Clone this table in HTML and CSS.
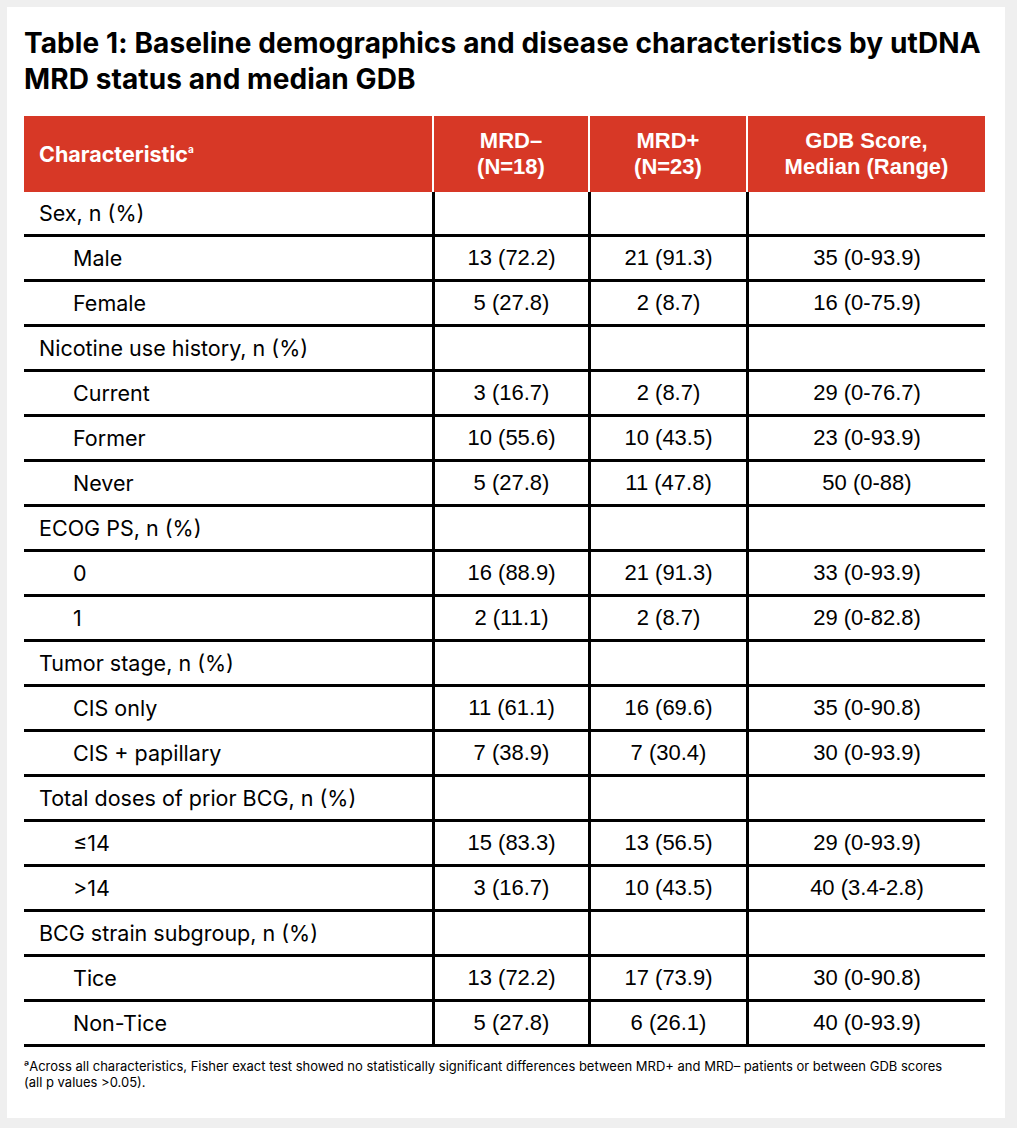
FILE: index.html
```html
<!DOCTYPE html>
<html lang="en">
<head>
<meta charset="utf-8">
<title>Table 1</title>
<link rel="stylesheet" href="styles.css">
</head>
<body>
<div class="card">
  <h1 class="title">Table 1: Baseline demographics and disease characteristics by utDNA MRD status and median GDB</h1>
  <table class="data">
    <colgroup>
      <col class="c1"><col class="c2"><col class="c3"><col class="c4">
    </colgroup>
    <thead>
      <tr>
        <th class="lab">Characteristic<sup>a</sup></th>
        <th>MRD–<br>(N=18)</th>
        <th>MRD+<br>(N=23)</th>
        <th>GDB Score,<br>Median (Range)</th>
      </tr>
    </thead>
    <tbody>
      <tr class="cat"><td>Sex, n (%)</td><td></td><td></td><td></td></tr>
      <tr><td>Male</td><td>13 (72.2)</td><td>21 (91.3)</td><td>35 (0-93.9)</td></tr>
      <tr><td>Female</td><td>5 (27.8)</td><td>2 (8.7)</td><td>16 (0-75.9)</td></tr>
      <tr class="cat"><td>Nicotine use history, n (%)</td><td></td><td></td><td></td></tr>
      <tr><td>Current</td><td>3 (16.7)</td><td>2 (8.7)</td><td>29 (0-76.7)</td></tr>
      <tr><td>Former</td><td>10 (55.6)</td><td>10 (43.5)</td><td>23 (0-93.9)</td></tr>
      <tr><td>Never</td><td>5 (27.8)</td><td>11 (47.8)</td><td>50 (0-88)</td></tr>
      <tr class="cat"><td>ECOG PS, n (%)</td><td></td><td></td><td></td></tr>
      <tr><td>0</td><td>16 (88.9)</td><td>21 (91.3)</td><td>33 (0-93.9)</td></tr>
      <tr><td>1</td><td>2 (11.1)</td><td>2 (8.7)</td><td>29 (0-82.8)</td></tr>
      <tr class="cat"><td>Tumor stage, n (%)</td><td></td><td></td><td></td></tr>
      <tr><td>CIS only</td><td>11 (61.1)</td><td>16 (69.6)</td><td>35 (0-90.8)</td></tr>
      <tr><td>CIS + papillary</td><td>7 (38.9)</td><td>7 (30.4)</td><td>30 (0-93.9)</td></tr>
      <tr class="cat"><td>Total doses of prior BCG, n (%)</td><td></td><td></td><td></td></tr>
      <tr><td>≤14</td><td>15 (83.3)</td><td>13 (56.5)</td><td>29 (0-93.9)</td></tr>
      <tr><td>&gt;14</td><td>3 (16.7)</td><td>10 (43.5)</td><td>40 (3.4-2.8)</td></tr>
      <tr class="cat"><td>BCG strain subgroup, n (%)</td><td></td><td></td><td></td></tr>
      <tr><td>Tice</td><td>13 (72.2)</td><td>17 (73.9)</td><td>30 (0-90.8)</td></tr>
      <tr><td>Non-Tice</td><td>5 (27.8)</td><td>6 (26.1)</td><td>40 (0-93.9)</td></tr>
    </tbody>
  </table>
  <p class="note">ᵃAcross all characteristics, Fisher exact test showed no statistically significant differences between MRD+ and MRD– patients or between GDB scores (all p values &gt;0.05).</p>
</div>
</body>
</html>
```
FILE: styles.css
```css
html, body {
  margin: 0;
  padding: 0;
  background: #efefef;
}
.card {
  box-sizing: border-box;
  margin: 7px 12px 0 7px;
  width: 998px;
  height: 1111px;
  background: #fff;
  padding: 18px 19px 0 17px;
}
.title {
  margin: 0 0 19px;
  font-family: Inter, "Liberation Sans", sans-serif;
  font-weight: 700;
  font-size: 28px;
  line-height: 36px;
  color: #000;
  letter-spacing: 0.1px;
}
.data {
  width: 961px;
  border-collapse: separate;
  border-spacing: 0;
  table-layout: fixed;
}
.c1 { width: 408px; }
.c2 { width: 156px; }
.c3 { width: 158px; }
.c4 { width: 239px; }
.data th {
  background: #d73826;
  color: #fff;
  height: 76px;
  padding: 0;
  font-family: "Liberation Sans", Arial, sans-serif;
  font-weight: 700;
  font-size: 22px;
  line-height: 26px;
  text-align: center;
  vertical-align: middle;
}
.data th + th {
  border-left: 2px solid #fff;
}
.data th.lab {
  text-align: left;
  padding-left: 15px;
  font-family: Inter, "Liberation Sans", sans-serif;
  font-size: 21.5px;
}
.data th.lab sup {
  font-size: 10px;
  vertical-align: 9px;
  line-height: 0;
}
.data td {
  height: 42px;
  padding: 0;
  border-bottom: 3px solid #000;
  font-family: "Liberation Sans", Arial, sans-serif;
  font-size: 22px;
  color: #000;
  text-align: center;
  vertical-align: middle;
}
.data td + td {
  border-left: 3px solid #000;
}
.data td:first-child {
  text-align: left;
  padding-left: 49px;
  font-family: Inter, "Liberation Sans", sans-serif;
  font-size: 21.5px;
}
.data tr.cat td:first-child {
  padding-left: 15px;
}
.note {
  margin: 11px 0 0;
  font-family: Inter, "Liberation Sans", "DejaVu Sans", sans-serif;
  font-size: 13px;
  line-height: 16px;
  color: #000;
  width: 920px;
}
```
